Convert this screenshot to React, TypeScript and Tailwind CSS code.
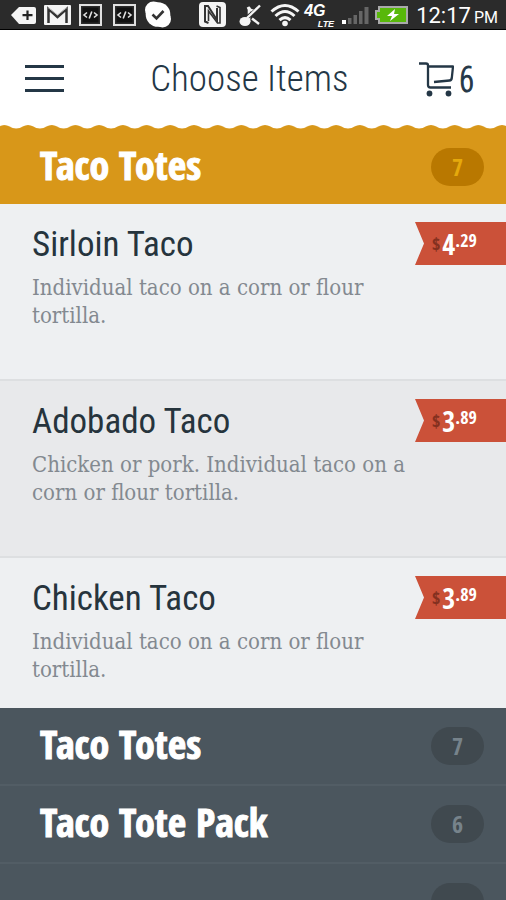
import { useState } from "react";
import clsx from "clsx";

type Item = { name: string; description: string; dollars: string; cents: string };

const items: Item[] = [
    { name: "Sirloin Taco", description: "Individual taco on a corn or flour tortilla.", dollars: "4", cents: ".29" },
    { name: "Adobado Taco", description: "Chicken or pork. Individual taco on a corn or flour tortilla.", dollars: "3", cents: ".89" },
    { name: "Chicken Taco", description: "Individual taco on a corn or flour tortilla.", dollars: "3", cents: ".89" },
];

const categories = [
    { name: "Taco Totes", count: "7" },
    { name: "Taco Tote Pack", count: "6" },
    { name: "", count: "" },
];

const CodeIcon = () => (
    <svg className="h-[22px] w-[23px]" viewBox="0 0 23 22" fill="none" stroke="#e0e0e0">
        <rect x="1" y="1" width="21" height="20" strokeWidth="2" />
        <rect x="3.5" y="3.5" width="16" height="15" fill="#111" stroke="none" />
        <path d="M8 8.500L5 11L8 13.500M15 8.500L18 11L15 13.500M12.800 7.500L10.200 14.500" strokeWidth="1.600" />
    </svg>
);

const StatusBar = () => (
    <div className="flex h-[30px] shrink-0 items-center justify-between border-b border-black bg-[#2b2b2b] pl-[11px] pr-2 text-white">
        <div className="flex items-center gap-2">
            <svg className="h-5 w-[25px]" viewBox="0 0 25 20">
                <path d="M0 10L8 2H23Q25 2 25 4V17Q25 19 23 19H8Z" fill="#f4f4f4" />
                <path d="M16.500 5.500V15M11.500 10.200H21.500" stroke="#222" strokeWidth="2.200" />
            </svg>
            <svg className="h-5 w-[27px]" viewBox="0 0 27 20">
                <rect width="27" height="20" rx="1" fill="#f4f4f4" />
                <path d="M4.500 18V4L13.500 12L22.500 4V18" fill="none" stroke="#333" strokeWidth="2.500" />
                <path d="M4 2.500L13.500 10L23 2.500" fill="none" stroke="#bbb" />
            </svg>
            <CodeIcon />
            <div className="ml-[3px]"><CodeIcon /></div>
            <svg className="h-[27px] w-7" viewBox="0 0 28 27">
                <circle cx="14" cy="13.500" r="12.300" fill="#fff" />
                <circle cx="9.500" cy="9" r="8.500" fill="#fff" />
                <circle cx="18.500" cy="18" r="8.500" fill="#fff" />
                <path d="M8.500 13.500L12.500 17.500L19.500 10" fill="none" stroke="#333" strokeWidth="2.600" />
            </svg>
        </div>
        <div className="flex items-center gap-2">
            <svg className="h-[25px] w-[27px]" viewBox="0 0 27 25">
                <rect width="27" height="25" rx="4" fill="#f4f4f4" />
                <path d="M9.500 21L6 19.500V4H9L18 18V6" fill="none" stroke="#333" strokeWidth="2" />
                <path d="M9.500 19V9L18.500 21H21V5.500L17.500 4" fill="none" stroke="#333" strokeWidth="1.600" />
            </svg>
            <svg className="ml-1 h-6 w-6" viewBox="0 0 24 24">
                <path d="M11 19V4" stroke="#f4f4f4" strokeWidth="2.600" />
                <path d="M10 4Q12 8 16 8" fill="none" stroke="#f4f4f4" strokeWidth="3" />
                <path d="M23 3.500L3 19" stroke="#2b2b2b" strokeWidth="4" />
                <path d="M22 2.500L9 15" stroke="#f4f4f4" strokeWidth="2.400" />
                <path d="M14 15.500L21 21" stroke="#f4f4f4" strokeWidth="2.400" />
                <ellipse cx="7" cy="18.500" rx="5.500" ry="4.500" fill="#f4f4f4" />
            </svg>
            <svg className="h-6 w-[30px]" viewBox="0 0 30 24" fill="none" stroke="#f4f4f4" strokeWidth="3">
                <path d="M1.500 8.500Q15 -3.500 28.500 8.500M5.500 13Q15 4 24.500 13M9.500 17.200Q15 12 20.500 17.200" />
                <circle cx="15" cy="20.500" r="2.800" fill="#f4f4f4" stroke="none" />
            </svg>
            <div className="-ml-1 flex w-[30px] flex-col pt-0.5 font-['Liberation_Sans'] font-bold italic">
                <div className="text-base leading-4">4G</div>
                <div className="text-right text-[9px] leading-[10px]">LTE</div>
            </div>
            <svg className="h-5 w-[27px]" viewBox="0 0 27 20">
                <path d="M0 15H4V19H0Z" fill="#fff" />
                <path d="M6 13H9.500V19H6ZM11.500 10H15V19H11.500ZM17 6H20.500V19H17ZM22.500 2H26.500V19H22.500Z" fill="#666" />
            </svg>
            <svg className="-ml-0.5 h-[18px] w-[33px]" viewBox="0 0 33 18">
                <path d="M4 1H32V17H4V13H1V5H4Z" fill="#58b80a" stroke="#aaa" strokeWidth="2" />
                <path d="M20 3L12 10H17L15 15L24 8H19Z" fill="#fff" />
            </svg>
            <div className="flex items-baseline gap-[3px] pt-1 font-['Roboto'] text-[22px] leading-6 whitespace-nowrap">
                <span>12:17</span>
                <span className="text-base">PM</span>
            </div>
        </div>
    </div>
);

const CountBadge = ({ count, active }: { count: string; active?: boolean }) => (
    <span className={clsx("flex h-[38px] w-[53px] shrink-0 items-center justify-center rounded-full text-2xl font-bold", active ? "bg-[#b97800] text-[#e5a90c]" : "bg-[#40494f] text-[#77838b]")}>{count}</span>
);

const PriceTag = ({ item }: { item: Item }) => (
    <div className="flex h-[43px] w-[91px] shrink-0 items-start bg-[#cb5139] pl-[17px] pt-1 font-bold text-white [clip-path:polygon(0_0,100%_0,100%_100%,0_100%,9px_50%)]">
        <span className="pt-1 text-lg text-[#84301f]">$</span>
        <span className="ml-0.5 text-[28px] leading-9">{item.dollars}</span>
        <span className="text-lg">{item.cents}</span>
    </div>
);

const App = () => {
    const [open, setOpen] = useState(true);

    return (
        <div className="flex h-screen flex-col overflow-hidden bg-[#4b565e] font-['Open_Sans_Condensed','Open_Sans',sans-serif]">
            <StatusBar />
            <header className="flex h-[95px] shrink-0 items-center justify-between bg-white pt-0.5 pr-8 pl-[25px] text-[#243746]">
                <button aria-label="Menu" className="flex w-[39px] flex-col gap-[9px]">
                    <span className="h-[3px] w-full bg-[#243746]" />
                    <span className="h-[3px] w-full bg-[#243746]" />
                    <span className="h-[3px] w-full bg-[#243746]" />
                </button>
                <h1 className="pl-4 font-['Roboto_Condensed',sans-serif] text-[37px] leading-[48px] font-light whitespace-nowrap">Choose Items</h1>
                <a href="#cart" aria-label="Cart, 6 items" className="flex items-center gap-1.5 text-4xl">
                    <svg className="h-9 w-[35px]" viewBox="0 0 35 36" fill="none" stroke="#243746" strokeWidth="2.300" strokeLinejoin="round">
                        <path d="M0 2.500H7Q9 2.500 9 4.500V24Q9 26.500 11.500 26.500H32" />
                        <path d="M9 5.500H34L32.800 17Q32.500 19.300 30.500 19.500L15 21" />
                        <circle cx="10.500" cy="32.500" r="2.900" fill="#243746" stroke="none" />
                        <circle cx="29.500" cy="32.500" r="2.900" fill="#243746" stroke="none" />
                    </svg>
                    <span className="font-['Open_Sans_Condensed_Light','Open_Sans_Condensed',sans-serif] [-webkit-text-stroke:1px]">6</span>
                </a>
            </header>
            <main>
                <svg className="block h-1 w-full bg-white">
                    <defs>
                        <pattern id="scallop" width="23.700" height="4" x="-7.500" patternUnits="userSpaceOnUse">
                            <path d="M0 4V3.500Q4 3.500 6.500 1.500Q11.850 -1.500 17.200 1.500Q19.700 3.500 23.700 3.500V4Z" fill="#d89719" />
                        </pattern>
                    </defs>
                    <rect width="100%" height="4" fill="url(#scallop)" />
                </svg>
                <button onClick={() => setOpen(!open)} className="flex h-[75px] w-full items-center justify-between bg-[#d89719] pl-10 pr-[22px] text-left">
                    <span className="pb-1 text-[40px] leading-[48px] font-bold text-white [-webkit-text-stroke:1px]">Taco Totes</span>
                    <CountBadge count="7" active />
                </button>
                {open && (
                    <ul>
                        {items.map((item, i) => (
                            <li key={item.name} className={clsx("flex items-start justify-between", i % 2 ? "bg-[#e8e9eb]" : "bg-[#eef0f2]", i < 2 ? "h-[177px] border-b-2 border-[#dddfe1]" : "h-[150px]")}>
                                <div className="min-w-0 flex-1 pt-5 pl-8">
                                    <h2 className="font-['Roboto_Condensed',sans-serif] text-[35px] leading-[42px] font-normal text-[#26343d]">{item.name}</h2>
                                    <p className="mt-2 -mr-2 font-['DejaVu_Serif_Condensed','DejaVu_Serif',serif] text-[22px] leading-7 text-[#838990]">{item.description}</p>
                                </div>
                                <div className="pt-[18px]"><PriceTag item={item} /></div>
                            </li>
                        ))}
                    </ul>
                )}
                {categories.map((category, i) => (
                    <button key={i} className="flex h-[78px] w-full items-center justify-between border-b-2 border-[#525d65] bg-[#4b565e] pl-10 pr-[22px] text-left">
                        <span className="pb-1 text-[40px] leading-[48px] font-bold text-white [-webkit-text-stroke:1px]">{category.name}</span>
                        <CountBadge count={category.count} />
                    </button>
                ))}
            </main>
        </div>
    );
};

export default App;
